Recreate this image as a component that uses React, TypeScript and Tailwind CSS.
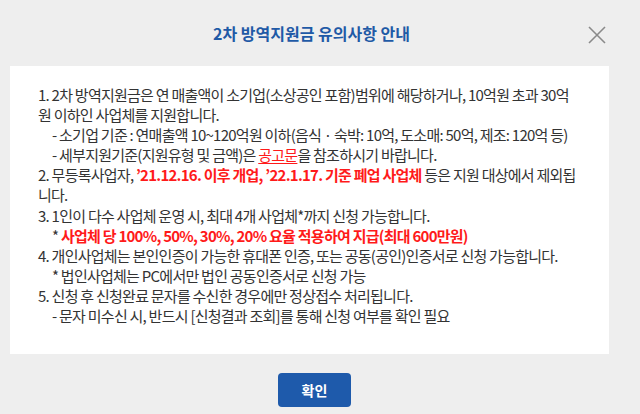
import React from 'react';

const red = 'text-[#ff1a1a] font-bold';

export default function App() {
  const lines: { indent?: boolean; content: React.ReactNode }[] = [
    { content: '1. 2차 방역지원금은 연 매출액이 소기업(소상공인 포함)범위에 해당하거나, 10억원 초과 30억' },
    { content: '원 이하인 사업체를 지원합니다.' },
    { indent: true, content: '- 소기업 기준 : 연매출액 10~120억원 이하(음식 · 숙박: 10억, 도소매: 50억, 제조: 120억 등)' },
    {
      indent: true,
      content: (
        <>
          - 세부지원기준(지원유형 및 금액)은 <span className="text-[#ff1a1a] underline underline-offset-2">공고문</span>을 참조하시기 바랍니다.
        </>
      ),
    },
    {
      content: (
        <>
          2. 무등록사업자, <span className={red}>’21.12.16. 이후 개업, ’22.1.17. 기준 폐업 사업체</span> 등은 지원 대상에서 제외됩
        </>
      ),
    },
    { content: '니다.' },
    { content: '3. 1인이 다수 사업체 운영 시, 최대 4개 사업체*까지 신청 가능합니다.' },
    {
      indent: true,
      content: (
        <>
          * <span className={red}>사업체 당 100%, 50%, 30%, 20% 요율 적용하여 지급(최대 600만원)</span>
        </>
      ),
    },
    { content: '4. 개인사업체는 본인인증이 가능한 휴대폰 인증, 또는 공동(공인)인증서로 신청 가능합니다.' },
    { indent: true, content: '* 법인사업체는 PC에서만 법인 공동인증서로 신청 가능' },
    { content: '5. 신청 후 신청완료 문자를 수신한 경우에만 정상접수 처리됩니다.' },
    { indent: true, content: '- 문자 미수신 시, 반드시 [신청결과 조회]를 통해 신청 여부를 확인 필요' },
  ];

  return (
    <div
      className="w-[640px] h-[414px] bg-[#eeeeee] overflow-hidden"
      style={{ fontFamily: '"Noto Sans CJK KR", "Noto Sans", sans-serif' }}
    >
      <div className="w-[619px] flex flex-col">
        {/* Header */}
        <div className="relative h-[66px] flex items-center justify-center pl-[4px]">
          <h2 className="text-[16px] font-bold text-[#1f5aa6]">2차 방역지원금 유의사항 안내</h2>
          <button type="button" className="absolute right-[13px] top-[26px] w-[18px] h-[18px]" aria-label="닫기">
            <svg viewBox="0 0 18 18" className="w-[18px] h-[18px]" fill="none" stroke="#8a8a8a" strokeWidth="1.6">
              <path d="M1 1L17 17M17 1L1 17" />
            </svg>
          </button>
        </div>

        {/* Body */}
        <div className="ml-[10px] w-[599px] h-[288px] bg-white pt-[19px] pl-[28px] text-[15px] leading-[20.1px] text-[#333333] tracking-[-0.75px]">
          {lines.map((line, i) => (
            <div key={i} className={`whitespace-nowrap ${line.indent ? 'pl-[14px]' : ''}`}>
              {line.content}
            </div>
          ))}
        </div>

        {/* Footer */}
        <div className="flex justify-center pt-[19px] pl-[10px]">
          <button
            type="button"
            className="w-[73px] h-[34px] rounded-[4px] bg-[#1e5aab] text-white text-[14px] font-bold"
          >
            확인
          </button>
        </div>
      </div>
    </div>
  );
}
